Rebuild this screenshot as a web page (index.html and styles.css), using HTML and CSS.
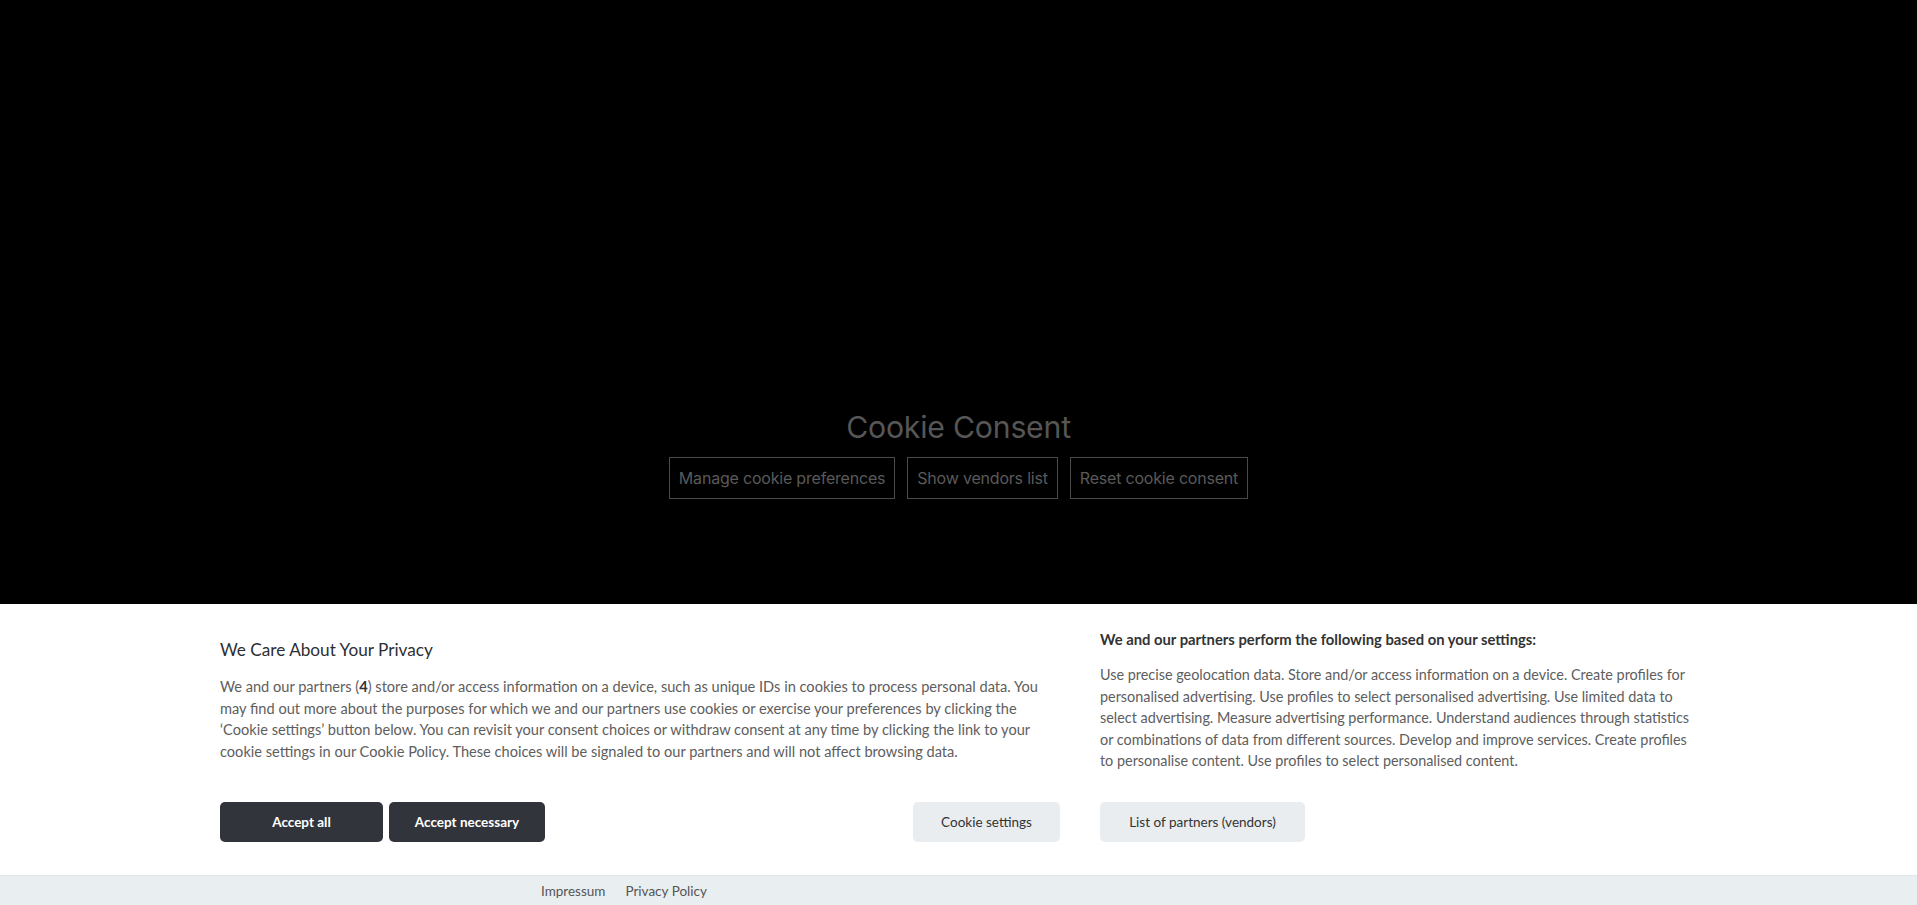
FILE: index.html
```html
<!DOCTYPE html>
<html lang="en">
<head>
<meta charset="utf-8">
<title>Cookie Consent</title>
<link rel="stylesheet" href="styles.css">
</head>
<body>
<main class="hero">
  <h1 class="hero-title">Cookie Consent</h1>
  <div class="hero-actions">
    <button class="hero-btn">Manage cookie preferences</button>
    <button class="hero-btn">Show vendors list</button>
    <button class="hero-btn">Reset cookie consent</button>
  </div>
</main>

<section class="banner">
  <div class="banner-grid">
    <div class="intro">
      <h2 class="intro-title">We Care About Your Privacy</h2>
      <p class="text text-intro">We and our partners (<b>4</b>) store and/or access information on a device, such as unique IDs in cookies to process personal data. You may find out more about the purposes for which we and our partners use cookies or exercise your preferences by clicking the ‘Cookie settings’ button below. You can revisit your consent choices or withdraw consent at any time by clicking the link to your cookie settings in our Cookie Policy. These choices will be signaled to our partners and will not affect browsing data.</p>
    </div>
    <div class="purposes">
      <h3 class="purposes-title">We and our partners perform the following based on your settings:</h3>
      <p class="text text-purposes">Use precise geolocation data. Store and/or access information on a device. Create profiles for personalised advertising. Use profiles to select personalised advertising. Use limited data to select advertising. Measure advertising performance. Understand audiences through statistics or combinations of data from different sources. Develop and improve services. Create profiles to personalise content. Use profiles to select personalised content.</p>
    </div>
    <div class="actions-left">
      <div class="btn-group">
        <button class="btn btn-dark btn-all">Accept all</button>
        <button class="btn btn-dark btn-nec">Accept necessary</button>
      </div>
      <button class="btn btn-light btn-settings">Cookie settings</button>
    </div>
    <div class="actions-right">
      <button class="btn btn-light btn-partners">List of partners (vendors)</button>
    </div>
  </div>
  <footer class="banner-footer">
    <nav class="footer-links">
      <a href="#">Impressum</a>
      <a href="#">Privacy Policy</a>
    </nav>
  </footer>
</section>
</body>
</html>
```

FILE: styles.css
```css
* { box-sizing: border-box; }
html, body { margin: 0; padding: 0; }
body {
  background: #000;
  height: 905px;
  overflow: hidden;
  font-family: Inter, Roboto, "Liberation Sans", sans-serif;
}

.hero {
  height: 905px;
  display: flex;
  flex-direction: column;
  align-items: center;
  justify-content: center;
}
.hero-title {
  margin: 0 0 10px;
  font-size: 30.2px;
  font-weight: 400;
  line-height: 40px;
  color: #565656;
  letter-spacing: -0.2px;
}
.hero-actions {
  display: flex;
  gap: 12px;
}
.hero-btn {
  background: transparent;
  border: 1px solid #4a4a4a;
  color: #5a5a5a;
  font-family: Inter, Roboto, sans-serif;
  font-size: 16px;
  height: 42px;
  padding: 0 9px;
  letter-spacing: -0.2px;
}

.banner {
  position: fixed;
  left: 0;
  right: 0;
  bottom: 0;
  height: 301px;
  background: #fff;
  font-family: Lato, "Noto Sans", sans-serif;
  color: #333;
  display: flex;
  flex-direction: column;
}
.banner-grid {
  width: 1477px;
  margin: 0 auto;
  padding-top: 25px;
  display: grid;
  grid-template-columns: 840px 1fr;
  column-gap: 40px;
  row-gap: 30px;
  flex: 1;
  align-content: start;
}
.intro-title {
  margin: 8px 0 13px;
  font-size: 17.2px;
  line-height: 26px;
  font-weight: 400;
  color: #2d2f33;
}
.purposes-title {
  margin: 0 0 15px;
  font-size: 14.8px;
  line-height: 20px;
  font-weight: 700;
  color: #333;
}
.text {
  margin: 0;
  line-height: 21.6px;
  color: #5e5e5e;
}
.text-intro { font-size: 14.6px; }
.text-purposes { font-size: 14.4px; }
.text b { color: #333; }

.actions-left {
  display: flex;
  justify-content: space-between;
}
.btn-group { display: flex; gap: 6px; }
.btn {
  height: 40px;
  border: 0;
  border-radius: 5px;
  font-family: Lato, "Noto Sans", sans-serif;
  font-size: 13.5px;
  cursor: pointer;
}
.btn-dark {
  background: #31353b;
  color: #fff;
  font-weight: 700;
}
.btn-light {
  background: #e9edf0;
  color: #333;
}
.btn-all { width: 163px; }
.btn-nec { width: 156px; }
.btn-settings { width: 147px; }
.btn-partners { width: 205px; }

.banner-footer {
  height: 30px;
  background: #e9eef1;
  border-top: 1px solid #e1e6ea;
}
.footer-links {
  width: 1477px;
  margin: 0 auto;
  padding-left: 321px;
  display: flex;
  gap: 20px;
  align-items: center;
  height: 29px;
}
.footer-links a {
  font-size: 13.5px;
  color: #555;
  text-decoration: none;
}
```
